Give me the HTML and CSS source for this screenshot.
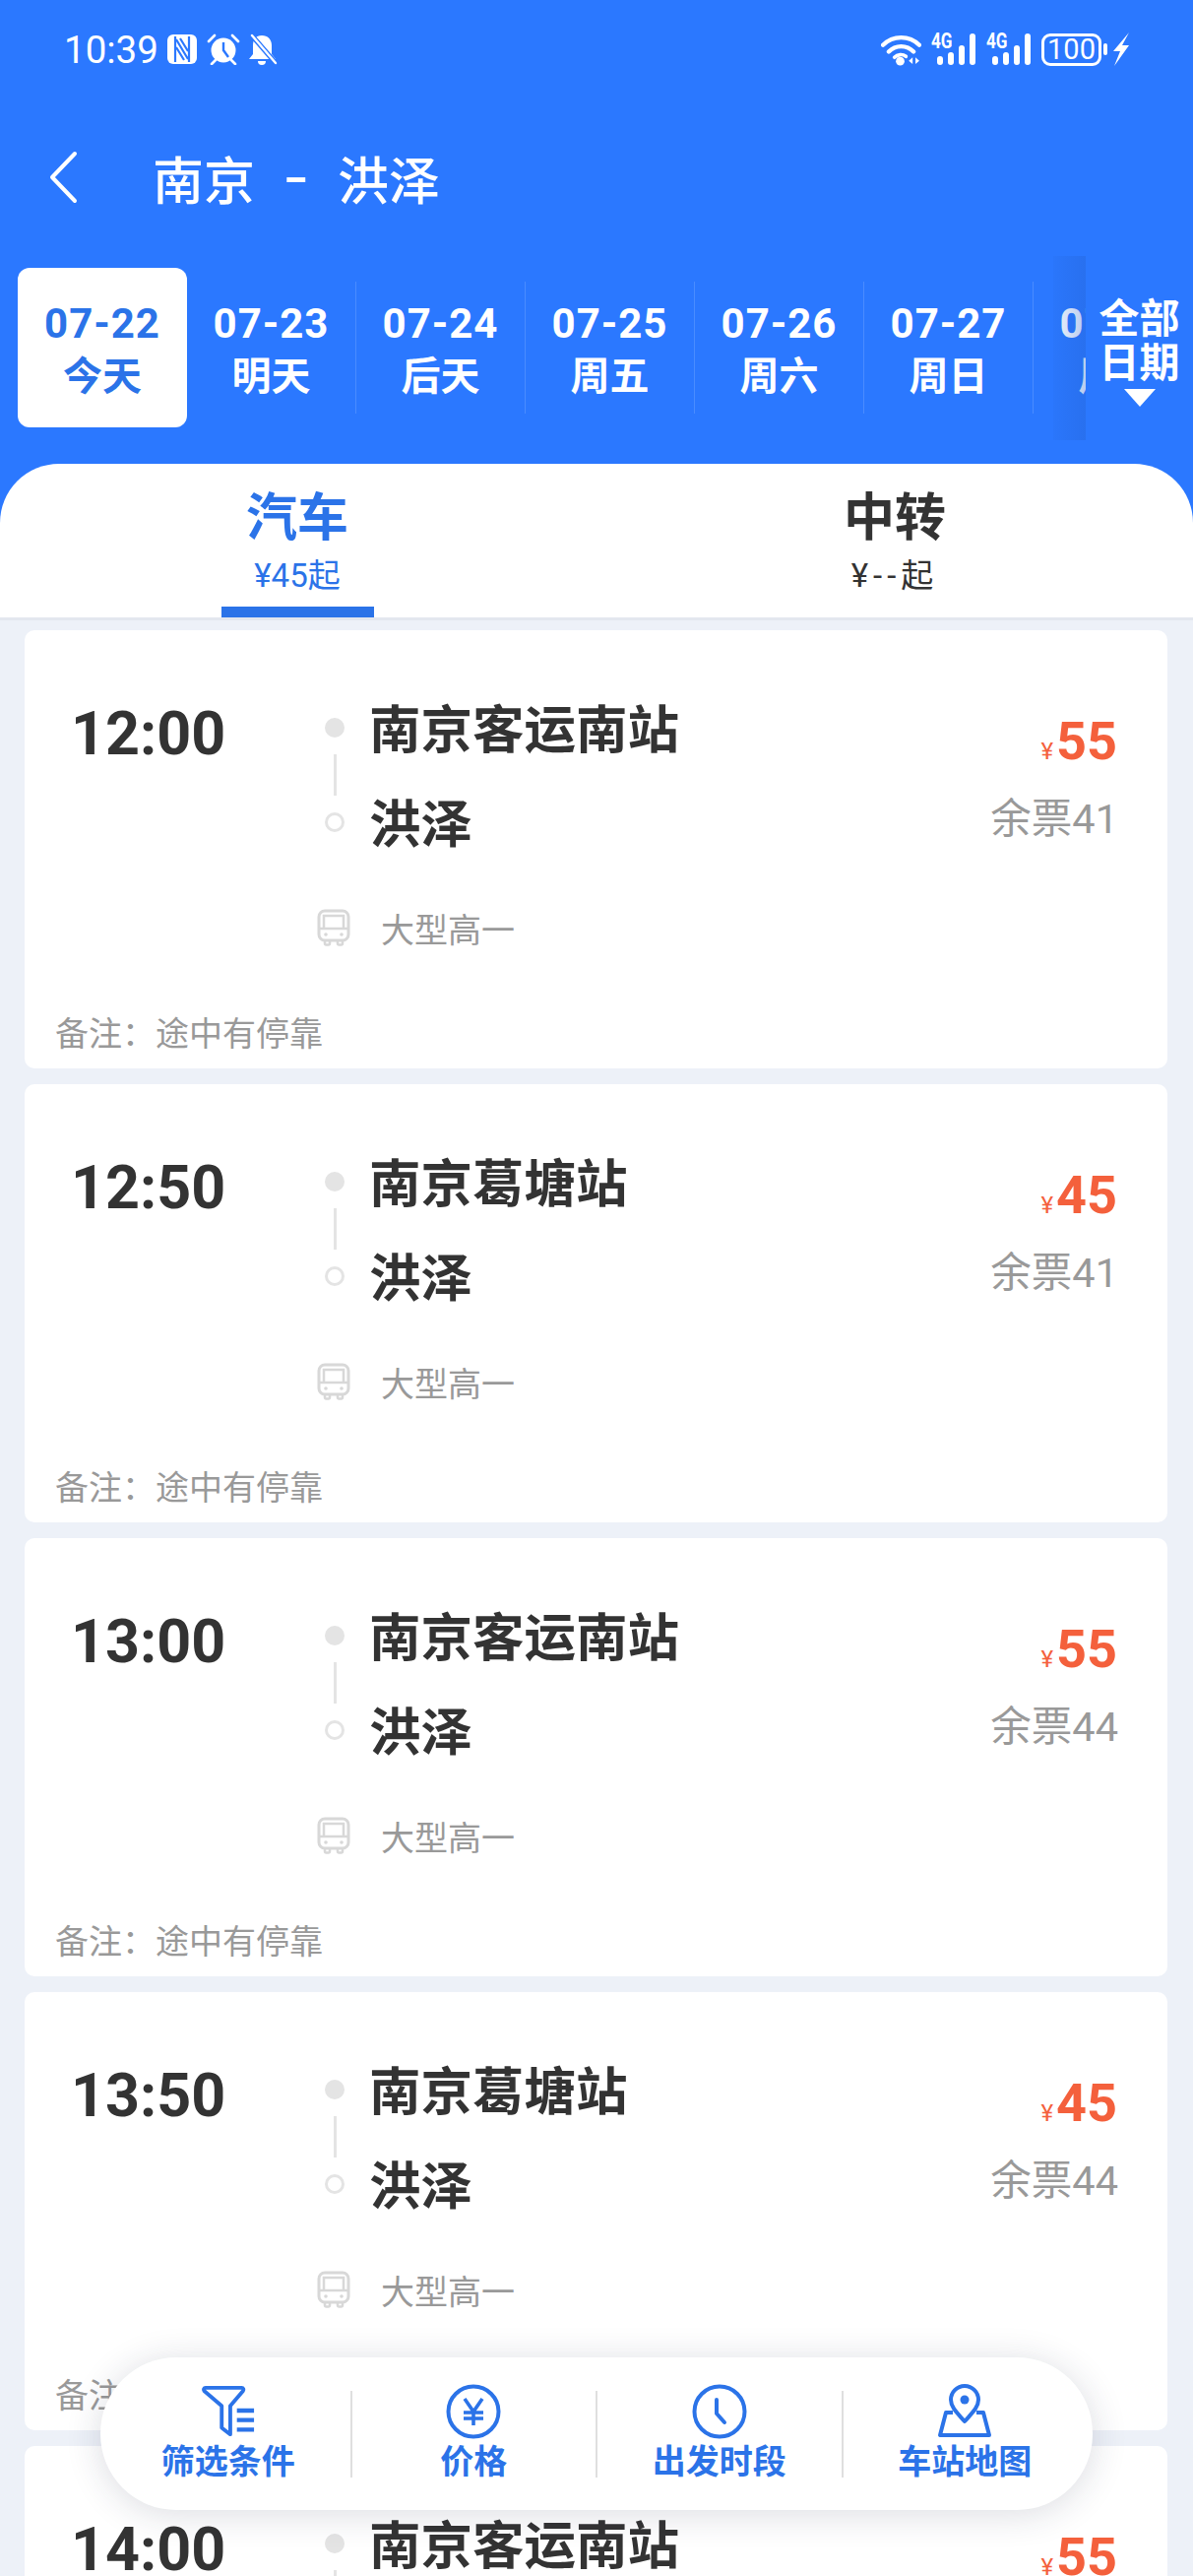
FILE: index.html
```html
<!DOCTYPE html>
<html lang="zh-CN">
<head>
    <meta charset="UTF-8">
    <meta name="viewport" content="width=device-width, initial-scale=1.0">
    <title>南京 - 洪泽</title>
    <link rel="stylesheet" href="styles.css">
</head>
<body>
<div class="page">
    <div class="top">
        <div class="status">
            <span class="clock">10:39</span>
            <svg class="st-nfc" viewBox="0 0 30 30"><rect x="0" y="0" width="30" height="30" rx="6" fill="#fff"/><path d="M8 2v26M22 2v26M9 5l12 20M9 13l8 13M21 17L13 4" stroke="#2b78ff" stroke-width="2.200" fill="none"/></svg>
            <svg class="st-alarm" viewBox="0 0 34 32"><circle cx="17" cy="17" r="12.500" fill="#fff"/><path d="M17 9v8l5 7" stroke="#2b78ff" stroke-width="2.400" fill="none"/><path d="M2 8l6-6M32 8l-6-6M5 31l4-4M29 31l-4-4" stroke="#fff" stroke-width="2.600" stroke-linecap="round"/></svg>
            <svg class="st-bell" viewBox="0 0 30 32"><path d="M14 2c6 0 10 4 10 10v9l4 5H1l4-5v-9C5 6 8 2 14 2z" fill="#fff"/><path d="M10 28h8a4 4 0 0 1-8 0z" fill="#fff"/><path d="M3 1l25 29" stroke="#2b78ff" stroke-width="5"/><path d="M4 2l24 28" stroke="#fff" stroke-width="2.400" stroke-linecap="round"/></svg>
            <span class="status-gap"></span>
            <svg class="st-wifi" viewBox="0 0 42 34"><path d="M2 12a27 27 0 0 1 38 0M8 19a18 18 0 0 1 26 0" stroke="#fff" stroke-width="4.400" fill="none" stroke-linecap="round"/><path d="M14 25a9 9 0 0 1 12-1" stroke="#fff" stroke-width="3.800" fill="none" stroke-linecap="round"/><circle cx="20" cy="29" r="4.500" fill="#fff"/><path d="M33 25v7l-4-3.500zM36 25v7l4-3.500z" fill="#fff"/></svg>
            <div class="st-signal"><span class="net">4G</span><i class="b1"></i><i class="b2"></i><i class="b3"></i><i class="b4"></i></div>
            <div class="st-signal"><span class="net">4G</span><i class="b1"></i><i class="b2"></i><i class="b3"></i><i class="b4"></i></div>
            <div class="battery">100</div>
            <i class="battery-nub"></i>
            <svg class="st-bolt" viewBox="0 0 16 34"><path d="M16 0L0 19h7L1 34l15-21H9z" fill="#fff"/></svg>
        </div>

        <div class="nav">
            <svg class="back" viewBox="0 0 30 54"><path d="M27 3L4 27l23 24" stroke="#fff" stroke-width="4" fill="none" stroke-linecap="round" stroke-linejoin="round"/></svg>
            <span class="nav-title">南京<span class="nav-dash">-</span>洪泽</span>
        </div>

        <div class="dates">
            <div class="date-list">
                <div class="date active"><b>07-22</b><b>今天</b></div>
                <div class="date"><b>07-23</b><b>明天</b></div>
                <div class="date"><b>07-24</b><b>后天</b></div>
                <div class="date"><b>07-25</b><b>周五</b></div>
                <div class="date"><b>07-26</b><b>周六</b></div>
                <div class="date"><b>07-27</b><b>周日</b></div>
                <div class="date"><b>07-28</b><b>周一</b></div>
            </div>
            <div class="all-dates">
                <span>全部</span>
                <span>日期</span>
                <i class="tri"></i>
            </div>
        </div>

        <div class="tabs">
            <div class="tab current">
                <strong>汽车</strong>
                <span>¥45起</span>
            </div>
            <div class="tab">
                <strong>中转</strong>
                <span class="no-price">¥--起</span>
            </div>
        </div>
    </div>

    <div class="list">
        <div class="card">
            <div class="card-top">
                <div class="time">12:00</div>
                <div class="mid">
                    <div class="route">
                        <div class="line"><i class="dot"></i><i class="bar"></i><i class="dot hollow"></i></div>
                        <div class="names"><div>南京客运南站</div><div>洪泽</div></div>
                    </div>
                    <div class="bus">
                        <svg viewBox="0 0 34 38"><rect x="2" y="2" width="30" height="30" rx="6" fill="none" stroke="#d8d8d8" stroke-width="3"/><path d="M7 7h20v13H7zM2 20h30" fill="none" stroke="#d8d8d8" stroke-width="2.500"/><circle cx="9" cy="26" r="1.800" fill="#d8d8d8"/><circle cx="25" cy="26" r="1.800" fill="#d8d8d8"/><path d="M8 32v3a1.500 1.500 0 0 0 1.500 1.500h2A1.500 1.500 0 0 0 13 35v-3M21 32v3a1.500 1.500 0 0 0 1.500 1.500h2A1.500 1.500 0 0 0 26 35v-3" fill="none" stroke="#d8d8d8" stroke-width="2.500"/></svg>
                        <span>大型高一</span>
                    </div>
                </div>
                <div class="side">
                    <div class="price"><small>¥</small>55</div>
                    <div class="left">余票41</div>
                </div>
            </div>
            <div class="note">备注：途中有停靠</div>
        </div>

        <div class="card">
            <div class="card-top">
                <div class="time">12:50</div>
                <div class="mid">
                    <div class="route">
                        <div class="line"><i class="dot"></i><i class="bar"></i><i class="dot hollow"></i></div>
                        <div class="names"><div>南京葛塘站</div><div>洪泽</div></div>
                    </div>
                    <div class="bus">
                        <svg viewBox="0 0 34 38"><rect x="2" y="2" width="30" height="30" rx="6" fill="none" stroke="#d8d8d8" stroke-width="3"/><path d="M7 7h20v13H7zM2 20h30" fill="none" stroke="#d8d8d8" stroke-width="2.500"/><circle cx="9" cy="26" r="1.800" fill="#d8d8d8"/><circle cx="25" cy="26" r="1.800" fill="#d8d8d8"/><path d="M8 32v3a1.500 1.500 0 0 0 1.500 1.500h2A1.500 1.500 0 0 0 13 35v-3M21 32v3a1.500 1.500 0 0 0 1.500 1.500h2A1.500 1.500 0 0 0 26 35v-3" fill="none" stroke="#d8d8d8" stroke-width="2.500"/></svg>
                        <span>大型高一</span>
                    </div>
                </div>
                <div class="side">
                    <div class="price"><small>¥</small>45</div>
                    <div class="left">余票41</div>
                </div>
            </div>
            <div class="note">备注：途中有停靠</div>
        </div>

        <div class="card">
            <div class="card-top">
                <div class="time">13:00</div>
                <div class="mid">
                    <div class="route">
                        <div class="line"><i class="dot"></i><i class="bar"></i><i class="dot hollow"></i></div>
                        <div class="names"><div>南京客运南站</div><div>洪泽</div></div>
                    </div>
                    <div class="bus">
                        <svg viewBox="0 0 34 38"><rect x="2" y="2" width="30" height="30" rx="6" fill="none" stroke="#d8d8d8" stroke-width="3"/><path d="M7 7h20v13H7zM2 20h30" fill="none" stroke="#d8d8d8" stroke-width="2.500"/><circle cx="9" cy="26" r="1.800" fill="#d8d8d8"/><circle cx="25" cy="26" r="1.800" fill="#d8d8d8"/><path d="M8 32v3a1.500 1.500 0 0 0 1.500 1.500h2A1.500 1.500 0 0 0 13 35v-3M21 32v3a1.500 1.500 0 0 0 1.500 1.500h2A1.500 1.500 0 0 0 26 35v-3" fill="none" stroke="#d8d8d8" stroke-width="2.500"/></svg>
                        <span>大型高一</span>
                    </div>
                </div>
                <div class="side">
                    <div class="price"><small>¥</small>55</div>
                    <div class="left">余票44</div>
                </div>
            </div>
            <div class="note">备注：途中有停靠</div>
        </div>

        <div class="card">
            <div class="card-top">
                <div class="time">13:50</div>
                <div class="mid">
                    <div class="route">
                        <div class="line"><i class="dot"></i><i class="bar"></i><i class="dot hollow"></i></div>
                        <div class="names"><div>南京葛塘站</div><div>洪泽</div></div>
                    </div>
                    <div class="bus">
                        <svg viewBox="0 0 34 38"><rect x="2" y="2" width="30" height="30" rx="6" fill="none" stroke="#d8d8d8" stroke-width="3"/><path d="M7 7h20v13H7zM2 20h30" fill="none" stroke="#d8d8d8" stroke-width="2.500"/><circle cx="9" cy="26" r="1.800" fill="#d8d8d8"/><circle cx="25" cy="26" r="1.800" fill="#d8d8d8"/><path d="M8 32v3a1.500 1.500 0 0 0 1.500 1.500h2A1.500 1.500 0 0 0 13 35v-3M21 32v3a1.500 1.500 0 0 0 1.500 1.500h2A1.500 1.500 0 0 0 26 35v-3" fill="none" stroke="#d8d8d8" stroke-width="2.500"/></svg>
                        <span>大型高一</span>
                    </div>
                </div>
                <div class="side">
                    <div class="price"><small>¥</small>45</div>
                    <div class="left">余票44</div>
                </div>
            </div>
            <div class="note">备注：途中有停靠</div>
        </div>

        <div class="card">
            <div class="card-top">
                <div class="time">14:00</div>
                <div class="mid">
                    <div class="route">
                        <div class="line"><i class="dot"></i><i class="bar"></i><i class="dot hollow"></i></div>
                        <div class="names"><div>南京客运南站</div><div>洪泽</div></div>
                    </div>
                </div>
                <div class="side">
                    <div class="price"><small>¥</small>55</div>
                </div>
            </div>
        </div>
    </div>

    <div class="toolbar">
        <div class="tool">
            <svg viewBox="0 0 58 56"><path d="M5 3h38a2 2 0 0 1 1.500 3.300L31 22v30l-9-7V22L3.500 6.300A2 2 0 0 1 5 3z" fill="none" stroke="#2b73e8" stroke-width="4" stroke-linejoin="round"/><path d="M38 27h18M38 37h18M38 47h18" stroke="#2b73e8" stroke-width="4.500"/></svg>
            <span>筛选条件</span>
        </div>
        <i class="sep"></i>
        <div class="tool">
            <svg viewBox="0 0 56 56"><circle cx="28" cy="28" r="25.500" fill="none" stroke="#2b73e8" stroke-width="4"/><path d="M19 15l9 13 9-13M28 28v14M18 29h20M18 35h20" fill="none" stroke="#2b73e8" stroke-width="3.600"/></svg>
            <span>价格</span>
        </div>
        <i class="sep"></i>
        <div class="tool">
            <svg viewBox="0 0 56 56"><circle cx="28" cy="28" r="25.500" fill="none" stroke="#2b73e8" stroke-width="4"/><path d="M25 16v14l8 9" fill="none" stroke="#2b73e8" stroke-width="4" stroke-linecap="round" stroke-linejoin="round"/></svg>
            <span>出发时段</span>
        </div>
        <i class="sep"></i>
        <div class="tool">
            <svg viewBox="0 0 56 56"><path d="M28 38C21 30 14 24 14 16a14 14 0 0 1 28 0c0 8-7 14-14 22z" fill="none" stroke="#2b73e8" stroke-width="4" stroke-linejoin="round"/><circle cx="28" cy="16" r="4.500" fill="#2b73e8"/><path d="M16 29H9L3 52h50l-6-23h-7" fill="none" stroke="#2b73e8" stroke-width="4" stroke-linejoin="round"/></svg>
            <span>车站地图</span>
        </div>
    </div>
</div>
</body>
</html>
```

FILE: styles.css
```css
* {
    margin: 0;
    padding: 0;
    box-sizing: border-box;
}

body {
    font-family: Roboto, "Noto Sans CJK SC", sans-serif;
    color: #333;
    background-color: #edf1f8;
}

.page {
    position: relative;
    width: 1212px;
    height: 2616px;
    overflow: hidden;
}

.top {
    background-color: #2b78ff;
}

/* status bar */
.status {
    display: flex;
    align-items: center;
    height: 100px;
    padding-left: 65px;
    color: #fff;
}

.clock {
    font-size: 38.500px;
    width: 105px;
}

.status svg {
    display: block;
}

.st-nfc {
    width: 30px;
    height: 30px;
    margin-right: 10px;
}

.st-alarm {
    width: 34px;
    height: 32px;
    margin-right: 8px;
}

.st-bell {
    width: 30px;
    height: 32px;
}

.status-gap {
    flex: 1;
}

.st-wifi {
    width: 41px;
    height: 33px;
    margin-right: 10px;
}

.st-signal {
    position: relative;
    display: flex;
    align-items: flex-end;
    gap: 5px;
    width: 45px;
    height: 32px;
    margin-right: 11px;
    padding-left: 6px;
}

.st-signal i {
    display: block;
    width: 6px;
    background-color: #fff;
    border-radius: 3px;
}

.st-signal .b1 { height: 9px; }
.st-signal .b2 { height: 13px; }
.st-signal .b3 { height: 20px; }
.st-signal .b4 { height: 32px; }

.net {
    position: absolute;
    left: 0;
    top: -2px;
    font-size: 22px;
    font-weight: 700;
    line-height: 20px;
    transform: scaleX(0.78);
    transform-origin: left center;
}

.battery {
    width: 61px;
    height: 33px;
    border: 3px solid #fff;
    border-radius: 9px;
    font-size: 29px;
    line-height: 27px;
    text-align: center;
}

.battery-nub {
    width: 4px;
    height: 12px;
    margin: 0 6px 0 2px;
    background-color: #fff;
    border-radius: 2px;
}

.st-bolt {
    width: 16px;
    height: 34px;
    margin-right: 65px;
}

/* title row */
.nav {
    display: flex;
    align-items: center;
    height: 160px;
    padding-left: 49px;
}

.back {
    width: 30px;
    height: 54px;
    margin-right: 76px;
}

.nav-title {
    display: flex;
    align-items: center;
    font-size: 52px;
    font-weight: 500;
    color: #fff;
}

.nav-dash {
    width: 84px;
    text-align: center;
    transform: scaleX(1.4);
}

/* date strip */
.dates {
    display: flex;
    height: 211px;
    padding-top: 12px;
}

.date-list {
    display: flex;
    width: 1103px;
    height: 162px;
    padding-left: 18px;
    overflow: hidden;
}

.date {
    flex: 0 0 172px;
    display: flex;
    flex-direction: column;
    align-items: center;
    justify-content: center;
    gap: 4px;
    margin: 14px 0;
    padding-top: 6px;
    color: #fff;
    font-size: 40px;
    line-height: 50px;
    border-right: 1px solid rgba(255, 255, 255, 0.15);
}

.date b {
    font-weight: 700;
}

.date b:first-child {
    font-size: 42px;
    letter-spacing: 1px;
}

.date.active {
    margin: 0;
    color: #2b73e8;
    background-color: #fff;
    border-radius: 12px;
    border-right: 0;
}

.all-dates {
    position: relative;
    flex: 1;
    display: flex;
    flex-direction: column;
    align-items: center;
    height: 187px;
    margin-top: -12px;
    padding-top: 42px;
    color: #fff;
    font-size: 41px;
    font-weight: 700;
    line-height: 45px;
    background-color: #2b78ff;
}

.all-dates::before {
    content: "";
    position: absolute;
    left: -33px;
    top: 0;
    width: 33px;
    height: 100%;
    background: linear-gradient(to right, rgba(35, 95, 205, 0.08), rgba(35, 95, 205, 0.32));
}

.tri {
    width: 0;
    height: 0;
    margin-top: 3px;
    border-left: 16px solid transparent;
    border-right: 16px solid transparent;
    border-top: 18px solid #fff;
}

/* bus / transfer tabs */
.tabs {
    display: flex;
    height: 156px;
    background-color: #fff;
    border-radius: 60px 60px 0 0;
}

.tab {
    position: relative;
    display: flex;
    flex-direction: column;
    align-items: center;
    width: 606px;
    padding-top: 19px;
}

.tab:first-child {
    padding-right: 2px;
}

.tab strong {
    font-size: 52px;
    font-weight: 700;
    line-height: 74px;
}

.tab span {
    font-size: 33px;
    line-height: 41px;
}

.tab .no-price {
    letter-spacing: 5px;
}

.tab.current {
    color: #2b73e8;
}

.tab.current::after {
    content: "";
    position: absolute;
    left: 225px;
    bottom: 0;
    width: 155px;
    height: 11px;
    background-color: #2b73e8;
}

/* ticket list */
.list {
    border-top: 3px solid #e3e7ef;
    padding: 10px 26px 0 25px;
}

.card {
    display: flex;
    flex-direction: column;
    height: 445px;
    margin-bottom: 16px;
    background-color: #fff;
    border-radius: 10px;
}

.card-top {
    display: flex;
    padding: 51px 51px 0 47px;
}

.time {
    width: 258px;
    padding-top: 15px;
    font-size: 61px;
    font-weight: 700;
    line-height: 78px;
}

.mid {
    flex: 1;
}

.route {
    display: flex;
}

.line {
    display: flex;
    flex-direction: column;
    align-items: center;
    gap: 17px;
    width: 20px;
    margin-right: 25px;
    padding-top: 38px;
}

.dot {
    width: 20px;
    height: 20px;
    background-color: #e4e4e4;
    border-radius: 50%;
}

.dot.hollow {
    background-color: #fff;
    border: 3px solid #e4e4e4;
}

.bar {
    width: 3px;
    height: 42px;
    background-color: #e4e4e4;
}

.names {
    padding-top: 3px;
    font-size: 52.500px;
    font-weight: 700;
    line-height: 96px;
}

.bus {
    display: flex;
    align-items: center;
    height: 40px;
    margin: 36px 0 0 -8px;
    color: #999;
    font-size: 34px;
}

.bus svg {
    width: 34px;
    height: 38px;
    margin-right: 31px;
}

.side {
    text-align: right;
}

.price {
    padding-top: 26px;
    color: #f4603c;
    font-size: 54px;
    font-weight: 700;
    line-height: 72px;
}

.price small {
    margin-right: 3px;
    font-size: 24px;
    font-weight: 400;
}

.left {
    padding-top: 8px;
    margin-right: -1px;
    color: #999;
    font-size: 41.500px;
    line-height: 50px;
}

.note {
    margin-top: auto;
    padding: 0 0 12px 31px;
    color: #999;
    font-size: 34px;
    line-height: 46px;
}

/* floating filter bar */
.toolbar {
    position: absolute;
    left: 102px;
    top: 2394px;
    display: flex;
    align-items: center;
    width: 1008px;
    height: 155px;
    padding: 0 6px;
    background-color: #fff;
    border-radius: 77px;
    box-shadow: 0 4px 36px rgba(30, 40, 70, 0.16);
}

.tool {
    flex: 1;
    display: flex;
    flex-direction: column;
    align-items: center;
    color: #2b73e8;
    font-size: 34px;
    font-weight: 700;
    line-height: 46px;
}

.tool svg {
    width: 56px;
    height: 56px;
}

.sep {
    flex: 0 0 2px;
    height: 88px;
    background-color: #dfdfdf;
}
```
